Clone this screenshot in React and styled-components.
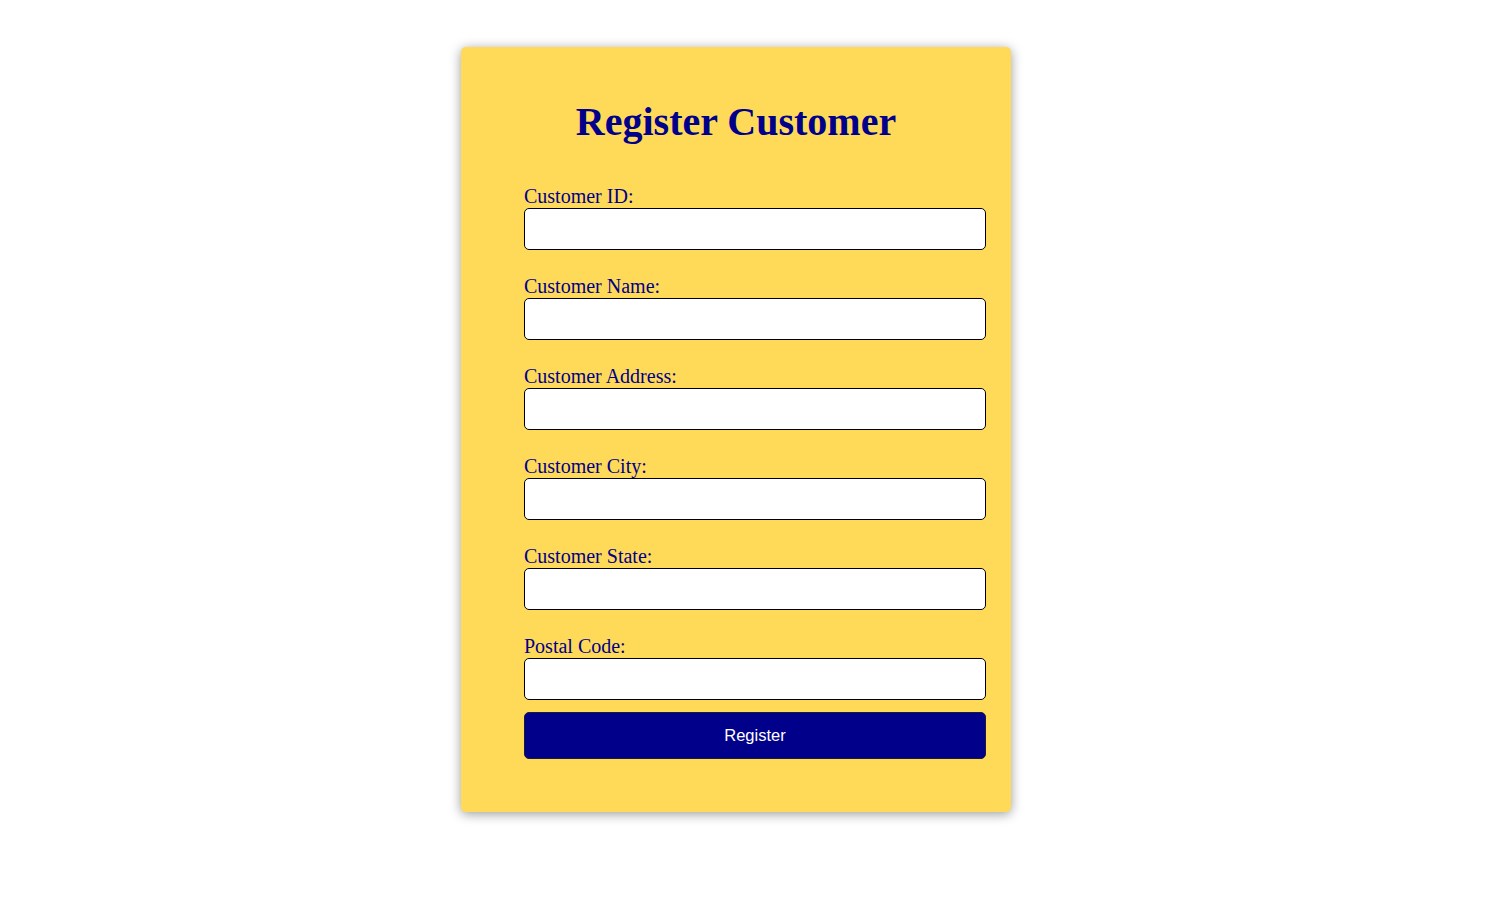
import React from 'react'
import styled, { createGlobalStyle } from 'styled-components'

const GlobalStyle = createGlobalStyle`
  body {
    margin: 0;
    background: #ffffff;
    font-family: "Liberation Serif", "Times New Roman", serif;
  }
`

const Page = styled.div`
  display: flex;
  justify-content: center;
  padding: 47px 18px 40px 0;
`

const Card = styled.div`
  width: 550px;
  box-sizing: border-box;
  padding: 51px 63px 53px;
  background: #ffda58;
  border-radius: 5px;
  box-shadow: 0 2px 12px rgba(0, 0, 0, 0.4);
`

const Title = styled.h1`
  margin: 0 0 40px;
  text-align: center;
  font-size: 40px;
  font-weight: bold;
  color: #00008b;
`

const Form = styled.form`
  display: flex;
  flex-direction: column;
`

const Field = styled.div`
  display: flex;
  flex-direction: column;
  margin-bottom: ${(p) => (p.last ? '12px' : '25px')};
`

const Label = styled.label`
  font-size: 20px;
  line-height: 23px;
  color: #00008b;
`

const Input = styled.input`
  width: calc(100% + 38px);
  height: 42px;
  box-sizing: border-box;
  border: 1px solid #000;
  border-radius: 5px;
  background: #fff;
  padding: 0 10px;
  font-size: 16px;
`

const Button = styled.button`
  width: calc(100% + 38px);
  height: 47px;
  box-sizing: border-box;
  border: 1px solid #1a1a3a;
  border-radius: 5px;
  background: #00008b;
  color: #fff;
  font-family: "Liberation Sans", Arial, sans-serif;
  font-size: 16.5px;
  cursor: pointer;
`

const fields = [
  'Customer ID:',
  'Customer Name:',
  'Customer Address:',
  'Customer City:',
  'Customer State:',
  'Postal Code:',
]

export default function App() {
  return (
    <>
      <GlobalStyle />
      <Page>
        <Card>
          <Title>Register Customer</Title>
          <Form onSubmit={(e) => e.preventDefault()}>
            {fields.map((f, i) => (
              <Field key={f} last={i === fields.length - 1}>
                <Label>{f}</Label>
                <Input type="text" />
              </Field>
            ))}
            <Button type="submit">Register</Button>
          </Form>
        </Card>
      </Page>
    </>
  )
}
